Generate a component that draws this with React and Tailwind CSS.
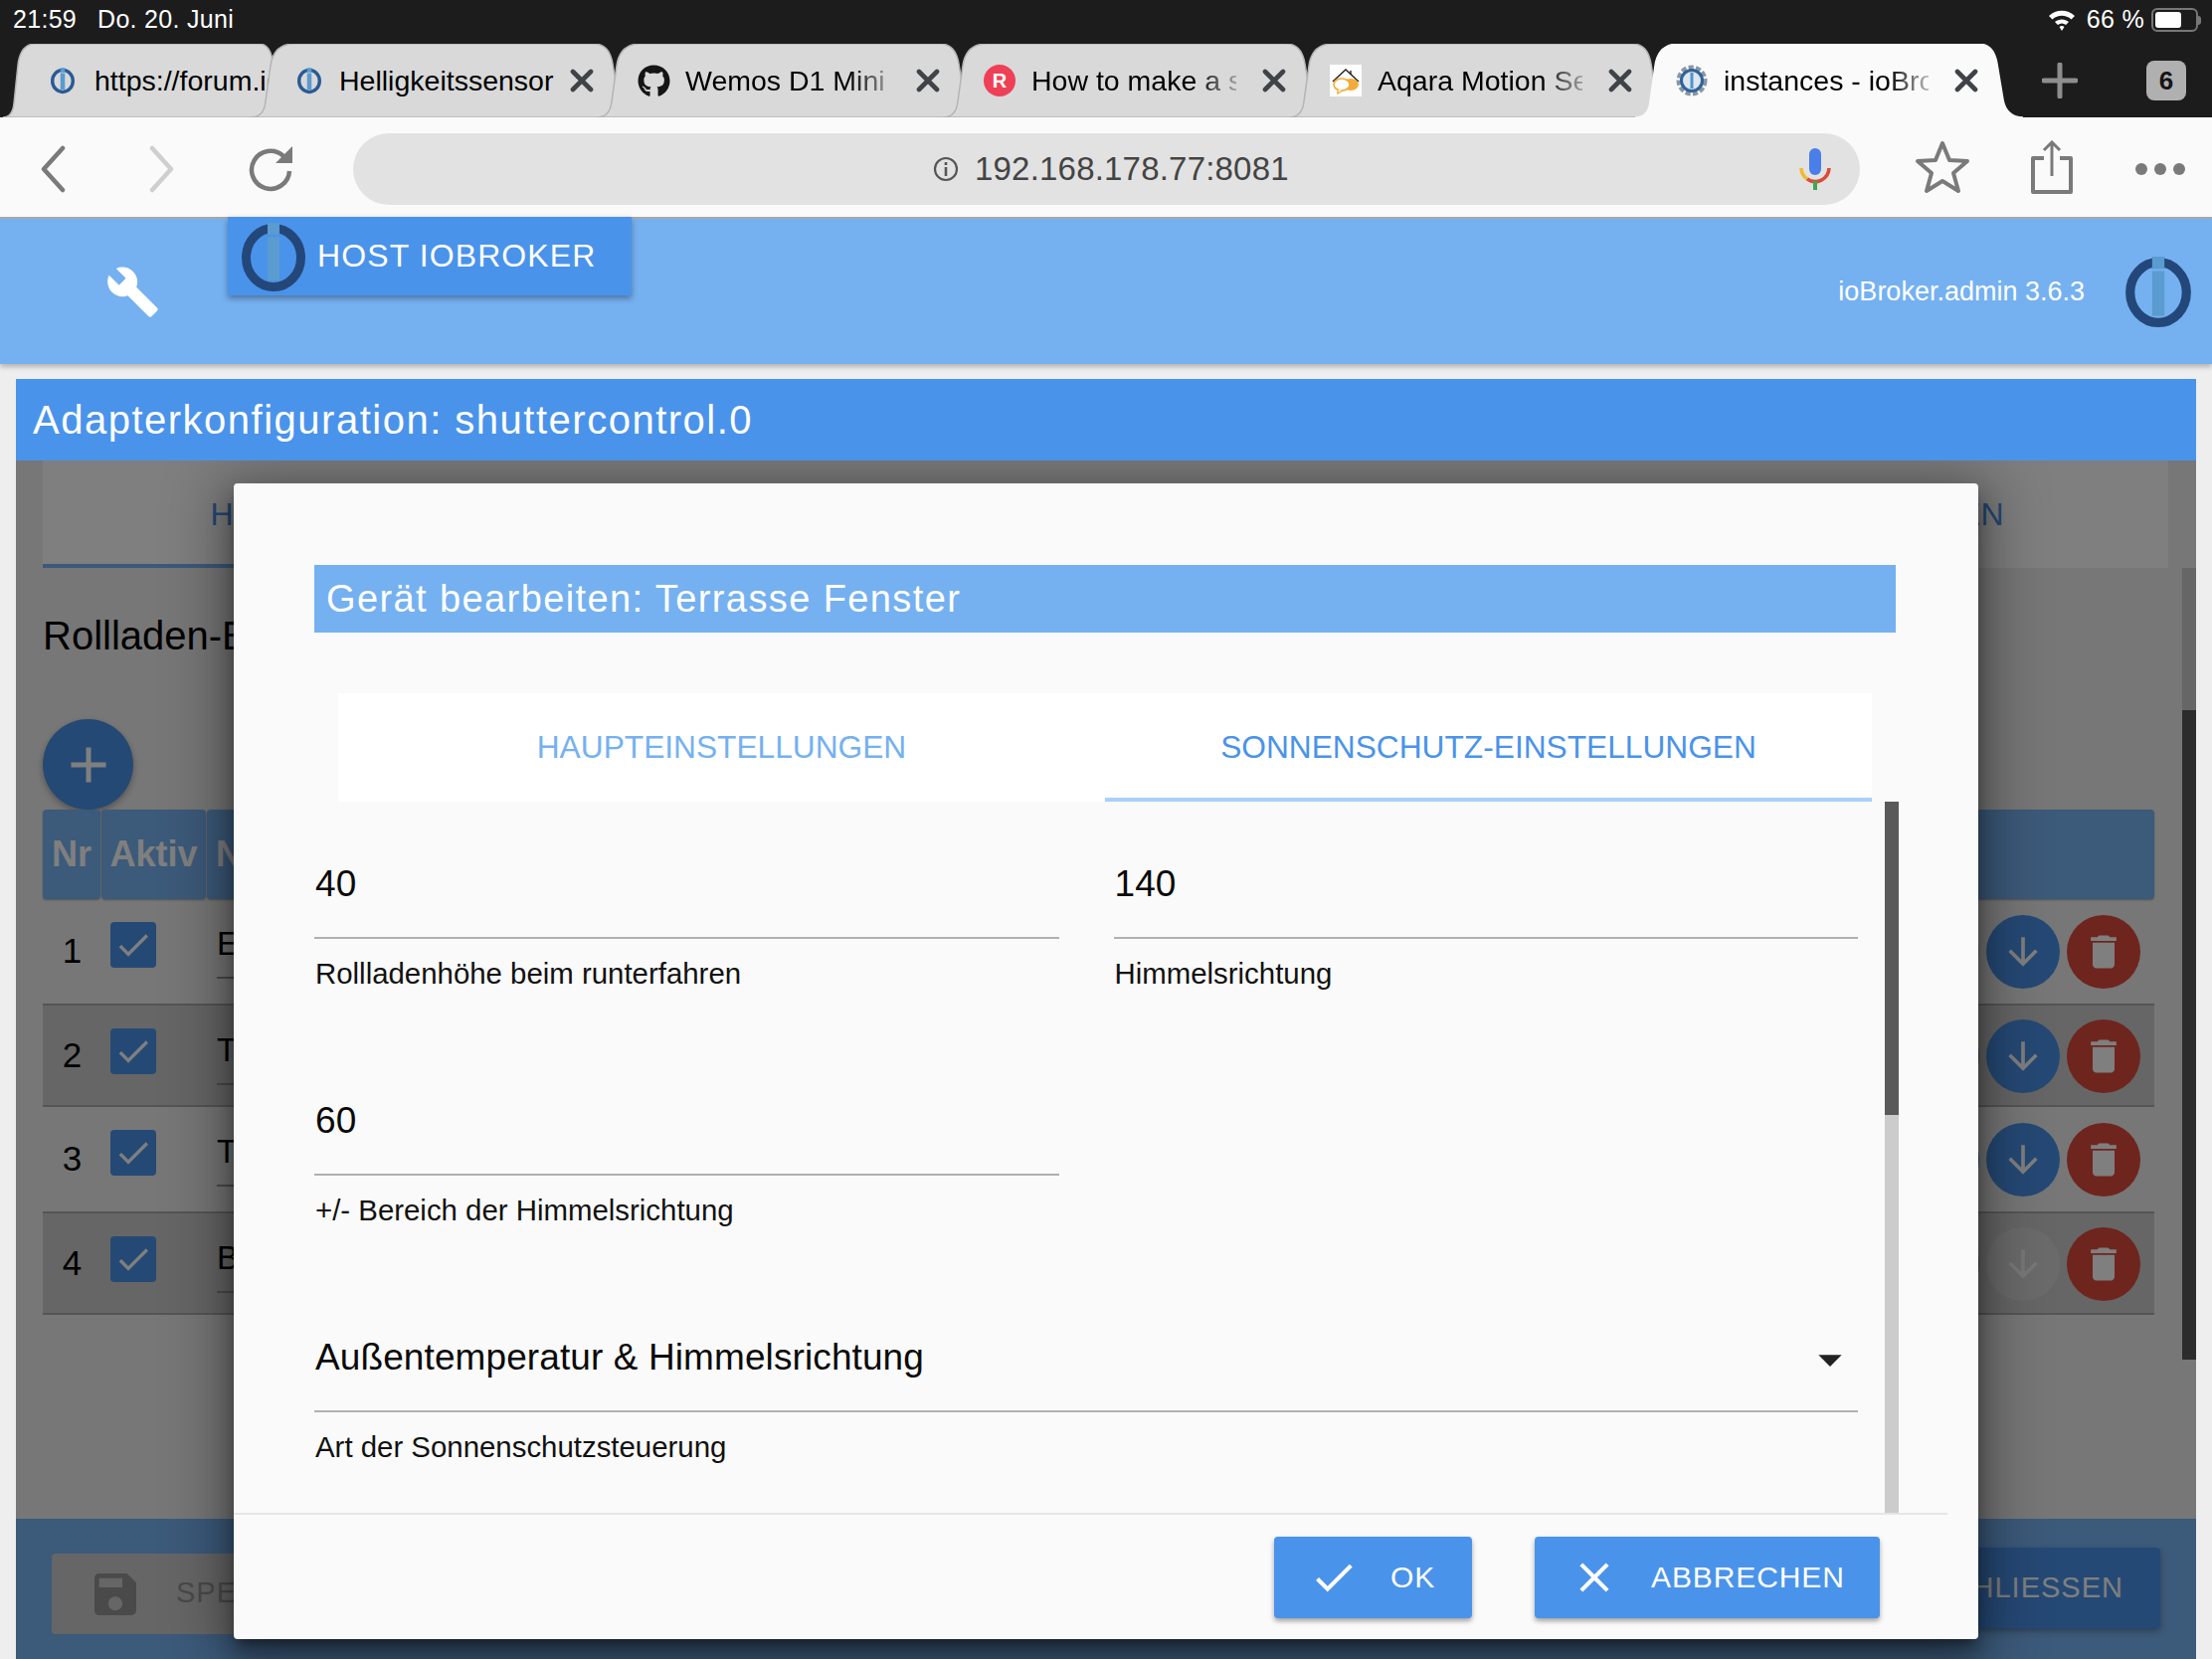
import {
  MdAdd,
  MdArrowDownward,
  MdArrowDropDown,
  MdBuild,
  MdCheck,
  MdClose,
  MdDelete,
  MdSave,
} from "react-icons/md";
import { FaGithub } from "react-icons/fa";

function Logo({ className, ring = "#24477a", bar = "#5a9bd0" }) {
  return (
    <svg viewBox="0 0 64 70" className={className}>
      <ellipse cx="32" cy="36" rx="27.5" ry="29.5" fill="none" stroke={ring} strokeWidth="9" />
      <rect x="26" y="1" width="12" height="12" fill={bar} />
      <rect x="26" y="15" width="12" height="44" fill={bar} />
    </svg>
  );
}

function GearIcon() {
  return (
    <svg viewBox="0 0 32 32" className="w-8 h-8">
      <circle cx="16" cy="16" r="13" fill="none" stroke="#8a96a3" strokeWidth="5" strokeDasharray="5 2.2" />
      <circle cx="16" cy="16" r="10.5" fill="#dfe6ee" stroke="#2f639c" strokeWidth="3" />
      <rect x="14.5" y="8" width="3" height="16" fill="#4f94cf" />
    </svg>
  );
}

function RedditLikeIcon() {
  return (
    <div className="w-8 h-8 rounded-full bg-[#ee4056] text-white text-[20px] font-bold flex items-center justify-center">
      R
    </div>
  );
}

function AqaraIcon() {
  return (
    <svg viewBox="0 0 32 32" className="w-8 h-8 bg-white">
      <path d="M3 17 L16 5 L29 17" fill="none" stroke="#222" strokeWidth="1.4" />
      <path d="M21 6 l0 4" stroke="#222" strokeWidth="1.4" />
      <ellipse cx="21" cy="20" rx="8" ry="6" fill="#f3ab3a" />
      <ellipse cx="12" cy="20" rx="8" ry="6" fill="#fff" stroke="#f3ab3a" strokeWidth="1.6" />
      <path d="M8 25 l0 4 l5 -3" fill="#fff" stroke="#f3ab3a" strokeWidth="1.4" />
    </svg>
  );
}

function TabClose() {
  return (
    <svg viewBox="0 0 24 24" className="w-6 h-6 shrink-0">
      <path d="M3 3 L21 21 M21 3 L3 21" stroke="#3f4246" strokeWidth="4.6" strokeLinecap="round" />
    </svg>
  );
}

function BrowserTab({ width, icon, label, active, fade, close = true, pad = "pl-[41px]" }) {
  return (
    <div className={`relative shrink-0 h-full ${width}`}>
      <svg viewBox="0 0 390 74" preserveAspectRatio="none" className="absolute inset-0 w-full h-full">
        <path
          d="M0 74 C10 74 14 68 15 58 L20 22 C22 8 30 0 44 0 L345 0 C356 0 362 8 364 20 L370 56 C372 68 380 74 390 74 Z"
          fill={active ? "#fafafa" : "#d9d9d9"}
          stroke={active ? "#fafafa" : "#b4b4b4"}
          strokeWidth="1.5"
          vectorEffect="non-scaling-stroke"
        />
      </svg>
      <div className={`relative h-full flex items-center ${pad}`}>
        <div className="w-[48px] shrink-0 flex justify-start">{icon}</div>
        <div
          className={`shrink-0 overflow-hidden whitespace-nowrap text-[28.5px] text-black ${
            fade ? "w-[206px] mr-[12px] [mask-image:linear-gradient(to_right,black_80%,rgba(0,0,0,0.25)_100%)]" : "w-[218px]"
          }`}
        >
          {label}
        </div>
        {close && (
          <div className="ml-[14px]">
            <TabClose />
          </div>
        )}
      </div>
    </div>
  );
}

function StatusBar() {
  return (
    <div className="h-[44px] bg-[#1c1c1c] text-white text-[25px] tracking-[0.3px] flex items-center justify-between pl-[13px] pr-[11px] pb-[4px]">
      <div className="flex gap-[21px]">
        <span>21:59</span>
        <span>Do. 20. Juni</span>
      </div>
      <div className="flex items-center">
        <svg viewBox="0 0 28 24" className="w-[28px] h-[24px]">
          <path d="M1 8 C8 1 20 1 27 8 L23.5 11.5 C18 6.5 10 6.5 4.5 11.5 Z" fill="#fff" />
          <path d="M7 14 C11 10.5 17 10.5 21 14 L18 17 C15.5 15 12.5 15 10 17 Z" fill="#fff" />
          <path d="M11.5 19 C13 17.8 15 17.8 16.5 19 L14 23 Z" fill="#fff" />
        </svg>
        <span className="ml-[11px]">66 %</span>
        <div className="ml-[7px] w-[47px] h-[24px] rounded-[6px] border-2 border-[#777] p-[2px] flex">
          <div className="w-[26px] bg-white rounded-[3px]" />
        </div>
        <div className="w-[3px] h-[9px] bg-[#777] rounded-r-sm" />
      </div>
    </div>
  );
}

function TabStrip() {
  return (
    <div className="h-[74px] bg-[#1c1c1c] flex items-stretch pl-[3px]">
      <BrowserTab
        width="w-[291px]"
        pad="pl-[44px]"
        close={false}
        icon={<Logo className="ml-[4px] w-[24px] h-[32px]" ring="#2a5a95" />}
        label="https://forum.iobroker.net"
      />
      <div className="-ml-[42px]">
        <BrowserTab width="w-[390px]" icon={<Logo className="ml-[6px] w-[24px] h-[32px]" ring="#2a5a95" />} label="Helligkeitssensor" />
      </div>
      <div className="-ml-[42px]">
        <BrowserTab width="w-[390px]" fade icon={<FaGithub size={33} color="#151515" />} label="Wemos D1 Mini and" />
      </div>
      <div className="-ml-[42px]">
        <BrowserTab width="w-[390px]" fade icon={<RedditLikeIcon />} label="How to make a smart" />
      </div>
      <div className="-ml-[42px]">
        <BrowserTab width="w-[390px]" fade icon={<AqaraIcon />} label="Aqara Motion Sensor" />
      </div>
      <div className="-ml-[42px]">
        <BrowserTab width="w-[390px]" active fade icon={<GearIcon />} label="instances - ioBroker" />
      </div>
      <div className="ml-[19px] w-[36px] flex items-center">
        <svg viewBox="0 0 36 36" className="w-[36px] h-[36px] shrink-0">
          <path d="M18 2 L18 34 M2 18 L34 18" stroke="#8e8e8e" strokeWidth="5" strokeLinecap="round" />
        </svg>
      </div>
      <div className="ml-[69px] flex items-center">
        <div className="w-[40px] h-[40px] rounded-[8px] bg-[#b0b0b0] text-[#151515] text-[26px] font-bold flex items-center justify-center">
          6
        </div>
      </div>
    </div>
  );
}

function Toolbar() {
  return (
    <div className="h-[102px] bg-[#fafafa] border-b-2 border-[#aaaaaa] flex items-center pl-[40px] pr-[26px] pt-[4px]">
      <svg viewBox="0 0 26 48" className="w-[26px] h-[48px] shrink-0">
        <path d="M23 3 L4 24 L23 45" fill="none" stroke="#7a7a7a" strokeWidth="4.5" strokeLinecap="round" strokeLinejoin="round" />
      </svg>
      <svg viewBox="0 0 26 48" className="ml-[84px] w-[26px] h-[48px] shrink-0">
        <path d="M3 3 L22 24 L3 45" fill="none" stroke="#cfcfcf" strokeWidth="4.5" strokeLinecap="round" strokeLinejoin="round" />
      </svg>
      <svg viewBox="0 0 46 48" className="ml-[74px] w-[46px] h-[48px] shrink-0">
        <path d="M35 11 A19 19 0 1 0 41 26" fill="none" stroke="#7a7a7a" strokeWidth="4.5" />
        <path d="M44 1 L44 18 L27 18 Z" fill="#7a7a7a" />
      </svg>
      <div className="ml-[59px] w-[1515px] h-[72px] rounded-[36px] bg-[#e2e2e2] flex items-center pl-[583px]">
        <svg viewBox="0 0 26 26" className="w-[26px] h-[26px]">
          <circle cx="13" cy="13" r="11" fill="none" stroke="#555" strokeWidth="2.2" />
          <rect x="11.7" y="6" width="2.6" height="3" fill="#555" />
          <rect x="11.7" y="11" width="2.6" height="9" fill="#555" />
        </svg>
        <span className="ml-[16px] text-[33px] text-[#444] tracking-[0.2px]">192.168.178.77:8081</span>
        <svg viewBox="0 0 32 42" className="ml-[513px] w-[32px] h-[42px] shrink-0">
          <rect x="10" y="0" width="12" height="27" rx="6" fill="#4a7ee8" />
          <path d="M2 20 A14 14 0 0 0 8 31" fill="none" stroke="#f2b92e" strokeWidth="3.6" />
          <path d="M8 31 A14 14 0 0 0 30 20" fill="none" stroke="#dc4b3a" strokeWidth="3.6" />
          <rect x="14" y="33" width="4" height="9" fill="#3fa652" />
        </svg>
      </div>
      <svg viewBox="0 0 56 54" className="ml-[55px] mb-[4px] w-[56px] h-[54px] shrink-0">
        <path d="M28 3 L35 20 L53 21 L39 33 L44 51 L28 41 L12 51 L17 33 L3 21 L21 20 Z" fill="none" stroke="#7a7a7a" strokeWidth="4" strokeLinejoin="round" />
      </svg>
      <svg viewBox="0 0 42 54" className="ml-[61px] mb-[4px] w-[42px] h-[54px] shrink-0">
        <path d="M13 18 L2 18 L2 52 L40 52 L40 18 L29 18" fill="none" stroke="#7a7a7a" strokeWidth="4" strokeLinejoin="round" />
        <path d="M21 36 L21 3 M13 10 L21 2 L29 10" fill="none" stroke="#7a7a7a" strokeWidth="3" />
      </svg>
      <div className="ml-[63px] flex gap-[7px]">
        <div className="w-[12px] h-[12px] rounded-full bg-[#7a7a7a]" />
        <div className="w-[12px] h-[12px] rounded-full bg-[#7a7a7a]" />
        <div className="w-[12px] h-[12px] rounded-full bg-[#7a7a7a]" />
      </div>
    </div>
  );
}

function AppHeader() {
  return (
    <div className="h-[146px] bg-[#75b1f0] shadow-[0_3px_5px_rgba(0,0,0,0.25)] flex items-start relative z-10">
      <MdBuild size={55} color="#fff" className="ml-[106px] mt-[46px] shrink-0" />
      <div className="ml-[68px] -mt-[2px] w-[406px] h-[79px] bg-[#4a93ea] shadow-[0_3px_6px_rgba(0,0,0,0.35)] flex items-center pl-[14px] shrink-0">
        <Logo className="w-[64px] h-[70px]" />
        <span className="ml-[12px] mb-[2px] text-white text-[32px] tracking-[1.1px] whitespace-nowrap">HOST IOBROKER</span>
      </div>
      <div className="ml-auto mt-[37px] pr-[18px] flex items-center">
        <span className="text-white text-[27px]">ioBroker.admin 3.6.3</span>
        <Logo className="ml-[38px] w-[72px] h-[72px]" />
      </div>
    </div>
  );
}

function RoundButton({ color, icon: Icon, iconColor = "#808080" }) {
  return (
    <div className={`w-[74px] h-[74px] rounded-full flex items-center justify-center shrink-0 ${color}`}>
      <Icon size={44} color={iconColor} />
    </div>
  );
}

function TableRow({ nr, name, dark, upDisabled, downDisabled }) {
  return (
    <div className={`h-[104.5px] flex items-stretch ${dark ? "bg-[#cccccc] border-y-2 border-[#aaaaaa]" : ""}`}>
      <div className="w-[59px] shrink-0 flex items-center justify-center text-[35px] text-black">{nr}</div>
      <div className="w-[106px] shrink-0 pl-[9px] pt-[23px]">
        <div className="w-[46px] h-[46px] rounded-[4px] bg-[#4a93ea] flex items-center justify-center">
          <MdCheck size={40} color="#fff" />
        </div>
      </div>
      <div className="w-[280px] shrink-0 pl-[10px] pt-[20px]">
        <div className="h-[60px] border-b-2 border-[#999] text-[33px] text-black">{name}</div>
      </div>
      <div className="ml-auto flex items-center gap-[7px] pr-[14px] pt-[2px]">
        <RoundButton color={upDisabled ? "bg-[#cccccc]" : "bg-[#4a93ea]"} icon={MdArrowDownward} />
        <RoundButton
          color={downDisabled ? "bg-[#d6d6d6]" : "bg-[#4a93ea]"}
          icon={MdArrowDownward}
          iconColor={downDisabled ? "#f0f0f0" : "#ffffff"}
        />
        <RoundButton color="bg-[#dc4a3c]" icon={MdDelete} iconColor="#ffffff" />
      </div>
    </div>
  );
}

function AdapterContent() {
  return (
    <div className="flex-1 min-h-0 relative bg-[#eeeeee]">
      <div className="ml-[27px] mr-[28px] h-[108px] bg-white grid grid-cols-3 text-[32px] text-[#4a93ea]">
        <div className="border-b-4 border-[#78b4f4] flex items-center justify-center pt-[4px]">HAUPTEINSTELLUNGEN</div>
        <div className="flex items-center justify-center">SONNENSCHUTZ</div>
        <div className="flex items-center justify-center pl-[8px]">EXTRAEINSTELLUNGEN</div>
      </div>
      <div className="ml-[27px] mt-[45px] text-[40px] leading-[46px] text-black">Rollladen-Einstellungen</div>
      <div className="ml-[27px] mt-[61px] w-[91px] h-[91px] rounded-full bg-[#4a93ea] shadow-[0_3px_6px_rgba(0,0,0,0.3)] flex items-center justify-center">
        <MdAdd size={60} color="#fff" />
      </div>
      <div className="ml-[27px] w-[2123px]">
        <div className="h-[90px] flex gap-[1px] text-[36px] font-bold text-white">
          <div className="w-[58px] rounded-[4px] bg-[#78b4f4] shadow-[0_1px_2px_rgba(0,0,0,0.3)] flex items-center justify-center">Nr</div>
          <div className="w-[105px] rounded-[4px] bg-[#78b4f4] shadow-[0_1px_2px_rgba(0,0,0,0.3)] flex items-center justify-center">Aktiv</div>
          <div className="flex-1 rounded-[4px] bg-[#78b4f4] shadow-[0_1px_2px_rgba(0,0,0,0.3)] flex items-center pl-[9px]">Name</div>
        </div>
        <TableRow nr="1" name="Esszimmer" upDisabled />
        <TableRow nr="2" name="Terrasse Tür" dark />
        <TableRow nr="3" name="Terrasse Fenster" />
        <TableRow nr="4" name="Bad" dark downDisabled />
      </div>
      <div className="absolute right-0 top-[108px] w-[14px] h-[796px] bg-[#cccccc]">
        <div className="mt-[143px] h-[653px] bg-[#585858]" />
      </div>
    </div>
  );
}

function BottomBar() {
  return (
    <div className="h-[141px] shrink-0 bg-[#78b4f4] flex items-start justify-between pl-[36px] pr-[36px]">
      <div className="mt-[35px] w-[500px] h-[81px] rounded-[4px] bg-[#cdcdcd] flex items-center pl-[36px] text-[29px] tracking-[1px] text-[#959595]">
        <MdSave size={56} color="#959595" />
        <span className="ml-[33px] mb-[2px]">SPEICHERN</span>
      </div>
      <div className="mt-[29px] w-[372px] h-[81px] rounded-[4px] bg-[#4a93ea] shadow-[0_3px_6px_rgba(0,0,0,0.3)] flex items-center justify-end pr-[37px] text-[29px] tracking-[1px] text-white">
        SCHLIESSEN
      </div>
    </div>
  );
}

function Field({ value, label, select }) {
  return (
    <div className="h-[238px]">
      <div className="h-[58px] pl-[1px] flex items-center justify-between text-[37px] tracking-[0.1px] text-[#0a0a0a]">
        <span>{value}</span>
        {select && <MdArrowDropDown size={56} color="#222" className="mt-[3px]" />}
      </div>
      <div className="h-[2px] bg-[#b0b0b0] mt-[24px]" />
      <div className="mt-[18px] pl-[1px] text-[29.4px] leading-[34px] text-[#111]">{label}</div>
    </div>
  );
}

function DialogButton({ icon: Icon, label, className }) {
  return (
    <div
      className={`h-[82px] rounded-[4px] bg-[#4a93ea] shadow-[0_3px_5px_rgba(0,0,0,0.35)] flex items-center text-white text-[30px] tracking-[0.9px] ${className}`}
    >
      <Icon size={50} color="#fff" />
      <span className="ml-[32px] mt-[-2px]">{label}</span>
    </div>
  );
}

function EditDialog() {
  return (
    <div className="absolute left-[219px] top-[105px] w-[1754px] h-[1162px] z-10 bg-[#fafafa] rounded-[4px] shadow-[0_16px_24px_2px_rgba(0,0,0,0.3),0_6px_60px_15px_rgba(0,0,0,0.3),0_8px_10px_-5px_rgba(0,0,0,0.4)] flex flex-col">
      <div className="mx-[81px] mt-[82px] mr-[83px] h-[68px] bg-[#75b1f0] flex items-center pl-[12px] text-white text-[38px] tracking-[1.4px]">
        Gerät bearbeiten: Terrasse Fenster
      </div>
      <div className="ml-[105px] mt-[61px] w-[1542px] h-[109px] bg-white grid grid-cols-2 text-[31.7px]">
        <div className="flex items-center justify-center pt-[1px] text-[#75b1f0]">HAUPTEINSTELLUNGEN</div>
        <div className="flex items-center justify-center pt-[5px] text-[#4a93ea] border-b-4 border-[#a8d0f8]">SONNENSCHUTZ-EINSTELLUNGEN</div>
      </div>
      <div className="relative flex-1 min-h-0 ml-[81px] mr-[80px] pt-[54px]">
        <div className="grid grid-cols-2 gap-x-[55px] pr-[41px]">
          <Field value="40" label="Rollladenhöhe beim runterfahren" />
          <Field value="140" label="Himmelsrichtung" />
          <Field value="60" label="+/- Bereich der Himmelsrichtung" />
          <div />
          <div className="col-span-2">
            <Field value="Außentemperatur & Himmelsrichtung" label="Art der Sonnenschutzsteuerung" select />
          </div>
        </div>
        <div className="absolute right-0 top-0 bottom-0 w-[14px] bg-[#cccccc]">
          <div className="h-[315px] bg-[#5a5a5a]" />
        </div>
      </div>
      <div className="h-[2px] bg-[#e6e6e6] mr-[31px] shrink-0" />
      <div className="h-[125px] shrink-0 flex justify-end gap-[63px] pt-[22px] pr-[99px]">
        <DialogButton icon={MdCheck} label="OK" className="w-[199px] pl-[35px]" />
        <DialogButton icon={MdClose} label="ABBRECHEN" className="w-[347px] pl-[35px]" />
      </div>
    </div>
  );
}

export default function App() {
  return (
    <div className="w-[2224px] h-[1668px] overflow-hidden bg-[#eeeeee] flex flex-col font-['Liberation_Sans',Arial,sans-serif]">
      <StatusBar />
      <TabStrip />
      <Toolbar />
      <AppHeader />
      <div className="relative flex-1 min-h-0 mx-[16px] mt-[15px] flex flex-col overflow-hidden">
        <div className="relative z-20 h-[82px] shrink-0 bg-[#4a93ea] flex items-center pl-[17px] text-white text-[40px] tracking-[1.5px]">
          Adapterkonfiguration: shuttercontrol.0
        </div>
        <AdapterContent />
        <BottomBar />
        <div className="absolute inset-x-0 top-[82px] bottom-0 bg-black/50" />
        <EditDialog />
      </div>
    </div>
  );
}
